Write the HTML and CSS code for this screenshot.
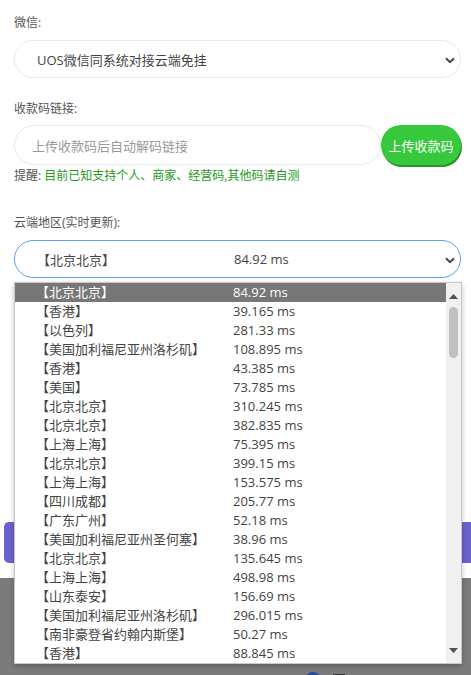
FILE: index.html
```html
<!DOCTYPE html>
<html lang="zh">
<head>
<meta charset="utf-8">
<link rel="stylesheet" href="styles.css">
</head>
<body>
<div class="page">
  <div class="form">
    <div class="label first">微信:</div>
    <div class="select">
      <span class="select-text">UOS微信同系统对接云端免挂</span>
      <svg class="chev" width="10" height="7" viewBox="0 0 10 7"><path d="M1 1.2 L5 5.2 L9 1.2" fill="none" stroke="#444" stroke-width="2"/></svg>
    </div>

    <div class="label">收款码链接:</div>
    <div class="input-row">
      <div class="input">上传收款码后自动解码链接</div>
      <div class="upload-btn">上传收款码</div>
    </div>
    <div class="tip">提醒: <span class="tip-green">目前已知支持个人、商家、经营码,其他码请自测</span></div>

    <div class="label region">云端地区(实时更新):</div>
    <div class="select active">
      <span class="col-name">【北京北京】</span><span class="col-ms">84.92 ms</span>
      <svg class="chev" width="10" height="7" viewBox="0 0 10 7"><path d="M1 1.2 L5 5.2 L9 1.2" fill="none" stroke="#444" stroke-width="2"/></svg>
    </div>
  </div>

  <div class="submit-btn"></div>

  <div class="footer">
    <span class="dot"></span><span class="sq"></span>
  </div>

  <div class="dropdown">
    <div class="options">
      <div class="opt selected"><span class="col-name">【北京北京】</span><span class="col-ms">84.92 ms</span></div>
      <div class="opt"><span class="col-name">【香港】</span><span class="col-ms">39.165 ms</span></div>
      <div class="opt"><span class="col-name">【以色列】</span><span class="col-ms">281.33 ms</span></div>
      <div class="opt"><span class="col-name">【美国加利福尼亚州洛杉矶】</span><span class="col-ms">108.895 ms</span></div>
      <div class="opt"><span class="col-name">【香港】</span><span class="col-ms">43.385 ms</span></div>
      <div class="opt"><span class="col-name">【美国】</span><span class="col-ms">73.785 ms</span></div>
      <div class="opt"><span class="col-name">【北京北京】</span><span class="col-ms">310.245 ms</span></div>
      <div class="opt"><span class="col-name">【北京北京】</span><span class="col-ms">382.835 ms</span></div>
      <div class="opt"><span class="col-name">【上海上海】</span><span class="col-ms">75.395 ms</span></div>
      <div class="opt"><span class="col-name">【北京北京】</span><span class="col-ms">399.15 ms</span></div>
      <div class="opt"><span class="col-name">【上海上海】</span><span class="col-ms">153.575 ms</span></div>
      <div class="opt"><span class="col-name">【四川成都】</span><span class="col-ms">205.77 ms</span></div>
      <div class="opt"><span class="col-name">【广东广州】</span><span class="col-ms">52.18 ms</span></div>
      <div class="opt"><span class="col-name">【美国加利福尼亚州圣何塞】</span><span class="col-ms">38.96 ms</span></div>
      <div class="opt"><span class="col-name">【北京北京】</span><span class="col-ms">135.645 ms</span></div>
      <div class="opt"><span class="col-name">【上海上海】</span><span class="col-ms">498.98 ms</span></div>
      <div class="opt"><span class="col-name">【山东泰安】</span><span class="col-ms">156.69 ms</span></div>
      <div class="opt"><span class="col-name">【美国加利福尼亚州洛杉矶】</span><span class="col-ms">296.015 ms</span></div>
      <div class="opt"><span class="col-name">【南非豪登省约翰内斯堡】</span><span class="col-ms">50.27 ms</span></div>
      <div class="opt"><span class="col-name">【香港】</span><span class="col-ms">88.845 ms</span></div>
    </div>
    <div class="scrollbar">
      <svg class="arrow" width="9" height="5" viewBox="0 0 9 5"><path d="M0 5 L4.5 0 L9 5 Z" fill="#505050"/></svg>
      <div class="track"><div class="thumb"></div></div>
      <svg class="arrow" width="9" height="5" viewBox="0 0 9 5"><path d="M0 0 L4.5 5 L9 0 Z" fill="#505050"/></svg>
    </div>
  </div>
</div>
</body>
</html>
```

FILE: styles.css
```css
html, body {
  margin: 0;
  padding: 0;
  overflow: hidden;
  background: #ffffff;
}
body {
  font-family: "Open Sans", "Noto Sans CJK SC", sans-serif;
  color: #444;
  width: 471px;
  height: 675px;
}
.page {
  position: relative;
  height: 675px;
  display: flex;
  flex-direction: column;
}
.form {
  padding: 0 10px 0 14px;
  display: flex;
  flex-direction: column;
}
.label {
  font-size: 12px;
  line-height: 17px;
  height: 17px;
  color: #555;
  margin-top: 22px;
}
.label.first {
  margin-top: 14px;
}
.label.region {
  margin-top: 30px;
}
.select {
  margin-top: 9px;
  height: 38px;
  box-sizing: border-box;
  border: 1px solid #e8e9ee;
  border-radius: 19px;
  display: flex;
  align-items: center;
  padding-left: 22px;
  padding-right: 4px;
  font-size: 13px;
  color: #444;
  position: relative;
}
.select.active {
  border-color: #5b9ef2;
}
.select-text {
  flex: 1;
}
.chev {
  position: absolute;
  right: 5px;
  top: 16px;
}
.col-name {
  width: 197px;
  flex: none;
  white-space: nowrap;
}
.col-ms {
  white-space: nowrap;
}
.input-row {
  margin-top: 8px;
  display: flex;
  height: 40px;
}
.input {
  flex: 1;
  box-sizing: border-box;
  border: 1px solid #e8e9ee;
  border-radius: 20px;
  padding-left: 17px;
  display: flex;
  align-items: center;
  font-size: 13px;
  color: #999;
}
.upload-btn {
  width: 80px;
  height: 40px;
  box-sizing: border-box;
  border-radius: 20px;
  background: #35c93b;
  color: #fff;
  font-size: 13px;
  display: flex;
  align-items: center;
  justify-content: center;
  box-shadow: 1px 2px 0 #27932b;
}
.tip {
  margin-top: 2px;
  font-size: 12px;
  line-height: 17px;
  color: #555;
}
.tip-green {
  color: #1a9a1a;
}
.submit-btn {
  margin-top: 244px;
  margin-left: 4px;
  margin-right: -10px;
  height: 41px;
  border-radius: 5px;
  background: #6c62cc;
}
.footer {
  margin-top: 15px;
  flex: 1;
  background: #7b7b7b;
  position: relative;
}
.dot {
  position: absolute;
  left: 305px;
  top: 94px;
  width: 16px;
  height: 16px;
  border-radius: 50%;
  background: #1f4f9a;
}
.sq {
  position: absolute;
  left: 333px;
  top: 96px;
  width: 12px;
  height: 12px;
  background: #333;
}
.dropdown {
  position: absolute;
  left: 14px;
  top: 282px;
  width: 448px;
  height: 382px;
  box-sizing: border-box;
  border: 1px solid #c9c9c9;
  background: #fff;
  box-shadow: 0 2px 5px rgba(0, 0, 0, 0.25);
  display: flex;
}
.options {
  flex: 1;
  display: flex;
  flex-direction: column;
}
.opt {
  height: 19px;
  line-height: 19px;
  font-size: 13px;
  color: #444;
  padding-left: 21px;
  display: flex;
}
.opt.selected {
  background: #777777;
  color: #fff;
}
.scrollbar {
  width: 15px;
  background: #f1f1f1;
  display: flex;
  flex-direction: column;
  align-items: center;
}
.arrow {
  margin: 11px 0 8px;
}
.scrollbar .arrow:last-child {
  margin: 8px 0 10px;
}
.track {
  flex: 1;
  width: 100%;
  display: flex;
  justify-content: center;
}
.thumb {
  width: 9px;
  height: 51px;
  border-radius: 5px;
  background: #c1c1c1;
}
```
